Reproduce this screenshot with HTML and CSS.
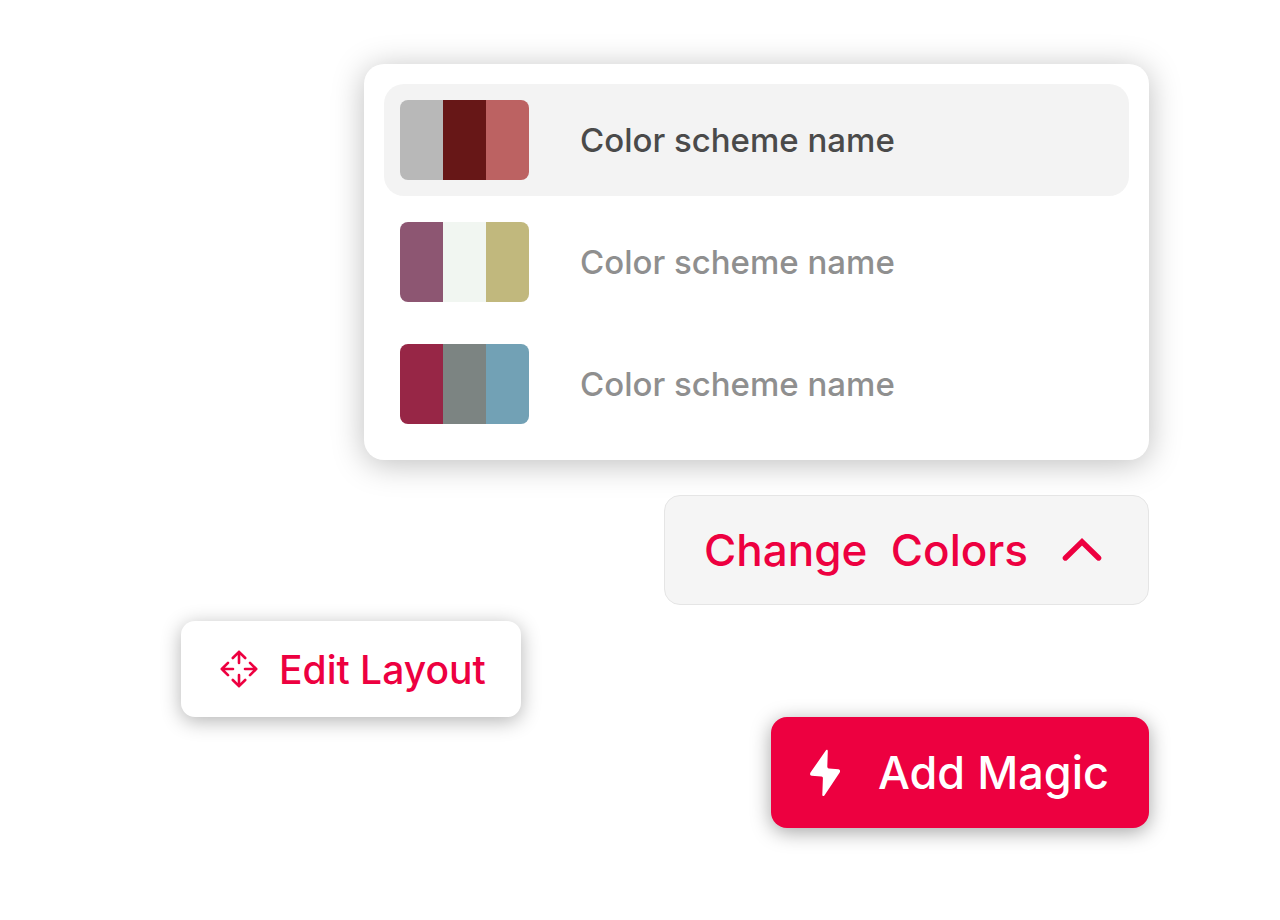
FILE: index.html
```html
<!DOCTYPE html>
<html lang="en">
<head>
    <meta charset="UTF-8">
    <title>Color schemes</title>
    <link rel="stylesheet" href="styles.css">
</head>
<body>
<main class="editor">
    <ul class="schemes" id="schemes">
        <li>
            <button type="button" class="scheme active">
                <span class="swatch"><i class="gray"></i><i class="maroon"></i><i class="rose"></i></span>
                <span>Color scheme name</span>
            </button>
        </li>
        <li>
            <button type="button" class="scheme">
                <span class="swatch"><i class="plum"></i><i class="mint"></i><i class="sand"></i></span>
                <span>Color scheme name</span>
            </button>
        </li>
        <li>
            <button type="button" class="scheme">
                <span class="swatch"><i class="berry"></i><i class="slate"></i><i class="sky"></i></span>
                <span>Color scheme name</span>
            </button>
        </li>
    </ul>
    <button type="button" class="btn change" aria-expanded="true" aria-controls="schemes">
        <span>Change&nbsp; Colors</span>
        <svg width="40" height="24" viewBox="0 0 40 24" fill="none" stroke="currentColor" stroke-width="5.4" stroke-linecap="round">
            <path d="M3.4 20L20 3.8L36.6 20"/>
        </svg>
    </button>
    <button type="button" class="btn edit">
        <svg width="38" height="38" viewBox="0 0 38 38" fill="none" stroke="currentColor" stroke-width="2.6" stroke-linecap="round" stroke-linejoin="round">
            <path d="M19 13V1.8M12.8 8L19 1.8L25.2 8"/>
            <path d="M19 25V36.2M12.8 30L19 36.2L25.2 30"/>
            <path d="M13 19H1.8M8 12.8L1.8 19L8 25.2"/>
            <path d="M25 19H36.2M30 12.8L36.2 19L30 25.2"/>
        </svg>
        <span>Edit Layout</span>
    </button>
    <button type="button" class="btn magic">
        <svg width="30" height="48" viewBox="0 0 30 48" fill="currentColor">
            <path d="M15.8 1.4C16.5 0.4 17.8 0.8 17.8 2L17.3 17.6C17.3 18.7 17.8 19.3 18.8 19.4L28.5 20.3C30 20.5 30.5 22.1 29.7 23.4L14.4 46.5C13.7 47.5 12.3 47.1 12.3 45.9L12.9 29.3C12.9 28.2 12.4 27.6 11.4 27.5L1.7 26.7C0.2 26.5 -0.4 24.9 0.5 23.6Z"/>
        </svg>
        <span>Add Magic</span>
    </button>
</main>
</body>
</html>
```
FILE: styles.css
```css
*{
    margin:0;
    padding:0;
    box-sizing: border-box;
    list-style: none;
}
body{
    background: #fff;
    font-family: Inter,"Liberation Sans",sans-serif;
    font-weight: 500;
}
button{
    border: none;
    background: none;
    font: inherit;
    cursor: pointer;
}
svg{
    flex: none;
}
.editor{
    display: flex;
    flex-direction: column;
    align-items: flex-end;
    padding: 64px 131px 64px 181px;
}
.schemes{
    display: flex;
    flex-direction: column;
    gap: 10px;
    align-self: stretch;
    margin: 0 0 35px 183px;
    padding: 20px;
    border-radius: 20px;
    background: #fff;
    box-shadow: 0 4px 32px rgba(0,0,0,.26);
}
.scheme{
    display: flex;
    align-items: center;
    gap: 51px;
    width: 100%;
    padding: 16px;
    border-radius: 20px;
    font-size: 33px;
    color: #8f8f8f;
}
.scheme.active{
    background: #f3f3f3;
    color: #4a4a4a;
}
.swatch{
    display: flex;
    height: 80px;
    border-radius: 8px;
    overflow: hidden;
}
.swatch i{
    width: 43px;
}
.gray{ background: #b8b8b8; }
.maroon{ background: #671717; }
.rose{ background: #bc6262; }
.plum{ background: #8d5672; }
.mint{ background: #f1f6f1; }
.sand{ background: #c1b87d; }
.berry{ background: #972646; }
.slate{ background: #7c8482; }
.sky{ background: #72a1b5; }
.btn{
    display: flex;
    align-items: center;
    border-radius: 16px;
    color: #ed0040;
}
.change{
    gap: 34px;
    height: 110px;
    margin-bottom: 16px;
    padding: 0 46px 0 39px;
    border: 1px solid #e5e5e5;
    background: #f5f5f5;
    font-size: 44px;
}
.edit{
    align-self: flex-start;
    gap: 21px;
    height: 96px;
    padding: 0 35px 0 39px;
    border-radius: 14px;
    background: #fff;
    font-size: 39px;
    box-shadow: 0 4px 20px rgba(0,0,0,.3);
}
.magic{
    gap: 38px;
    height: 111px;
    padding: 0 40px 0 39px;
    background: #ed0040;
    color: #fff;
    font-size: 45px;
    box-shadow: 0 4px 20px rgba(0,0,0,.36);
}
```
